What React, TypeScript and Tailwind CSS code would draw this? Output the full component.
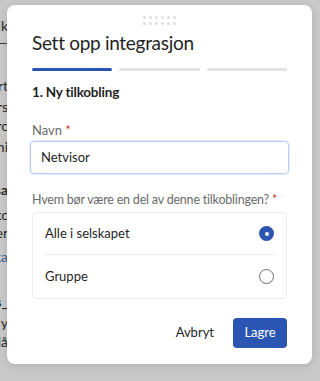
import React from "react";

const BgLine = ({ text, className = "", h }: { text: string; className?: string; h: string }) => (
  <div className={`flex justify-end overflow-hidden whitespace-nowrap w-[8px] ${h} items-center ${className}`}>
    <span>{text}</span>
  </div>
);

export default function App() {
  const dots = Array.from({ length: 12 });
  return (
    <div
      className="relative w-[320px] h-[381px] overflow-hidden bg-[#c9c9c9] text-[#2b2b2b]"
      style={{ fontFamily: "Lato, 'Noto Sans', sans-serif" }}
    >
      {/* background page */}
      <div className="flex flex-col text-[14px]">
        <BgLine text="Oversik" h="h-[43px]" className="pt-[8px]" />
        <div className="h-px w-[8px] bg-[#3a3a3a]" />
        <div className="h-[30px]" />
        <BgLine text="integrert" h="h-[22px]" />
        <BgLine text="brukers" h="h-[20px]" />
        <BgLine text="kontrc" h="h-[18px]" />
        <BgLine text="synkroni" h="h-[24px]" />
        <div className="h-[20px]" />
        <BgLine text="Brukersa" h="h-[22px]" className="font-bold" />
        <div className="h-[5px]" />
        <BgLine text="Dine kc" h="h-[18px]" />
        <BgLine text="Koble er" h="h-[18px]" />
        <div className="h-[5px]" />
        <BgLine text="les meka" h="h-[20px]" className="text-[#3a5da0]" />
        <div className="h-[24px]" />
        <BgLine text="Innstillings_" h="h-[22px]" className="font-bold" />
        <BgLine text="Hvordan y" h="h-[20px]" />
        <BgLine text="Vi prøver ålå" h="h-[18px]" />
        <div className="h-[28px]" />
        <div className="-ml-[7px] whitespace-nowrap text-[14px] leading-[16px]">
          sammenligne brukerne i Netvisor med brukerne i din
        </div>
      </div>

      {/* modal */}
      <div className="absolute left-[7px] top-[5px] w-[305px] h-[359px] bg-white rounded-[8px] shadow-[0_2px_10px_rgba(0,0,0,0.12)] flex flex-col px-[25px]">
        <div className="flex justify-center pt-[11px]">
          <div className="grid grid-cols-6 gap-x-[3px] gap-y-[3px]">
            {dots.map((_, i) => (
              <div key={i} className="w-[3px] h-[3px] rounded-full bg-[#dedede]" />
            ))}
          </div>
        </div>
        <h1 className="mt-[4px] text-[19px] leading-[28px] tracking-[-0.3px] text-[#1f1f1f] font-normal whitespace-nowrap">
          Sett opp integrasjon
        </h1>
        <div className="mt-[11px] flex gap-[7px]">
          <div className="flex-1 h-[3px] rounded-full bg-[#2a55b3]" />
          <div className="flex-1 h-[3px] rounded-full bg-[#e3e3e3]" />
          <div className="flex-1 h-[3px] rounded-full bg-[#e3e3e3]" />
        </div>
        <div className="mt-[11px] text-[13.5px] leading-[20px] font-bold tracking-[-0.2px] text-[#1f1f1f]">1. Ny tilkobling</div>
        <div className="mt-[19px] text-[13px] leading-[18px] text-[#6b6b6b]">
          Navn <span className="text-[#c0392b]">*</span>
        </div>
        <div className="mt-[2px] -mx-[2px] h-[33px] rounded-[4px] border border-[#b9cdf0] shadow-[0_0_0_1px_#e6edfa] flex items-center px-[10px] text-[13px] text-[#1f1f1f]">
          Netvisor
        </div>
        <div className="mt-[17px] text-[12.5px] leading-[18px] tracking-[-0.2px] text-[#6b6b6b] whitespace-nowrap">
          Hvem bør være en del av denne tilkoblingen? <span className="text-[#c0392b]">*</span>
        </div>
        <div className="mt-[3px] border border-[#ececec] rounded-[4px] px-[12px] flex flex-col">
          <div className="h-[42px] flex items-center justify-between border-b border-[#ececec]">
            <span className="text-[13px] text-[#1f1f1f]">Alle i selskapet</span>
            <span className="w-[15px] h-[15px] rounded-full bg-[#2a55b3] flex items-center justify-center">
              <span className="w-[4px] h-[4px] rounded-full bg-white" />
            </span>
          </div>
          <div className="h-[43px] flex items-center justify-between">
            <span className="text-[13px] text-[#1f1f1f]">Gruppe</span>
            <span className="w-[15px] h-[15px] rounded-full border-[1.5px] border-[#6b6b6b]" />
          </div>
        </div>
        <div className="mt-[19px] flex justify-end items-center gap-[19px]">
          <span className="text-[13px] text-[#1f1f1f]">Avbryt</span>
          <button className="w-[54px] h-[30px] rounded-[4px] bg-[#2a55b3] text-white text-[13px]">Lagre</button>
        </div>
      </div>
    </div>
  );
}
